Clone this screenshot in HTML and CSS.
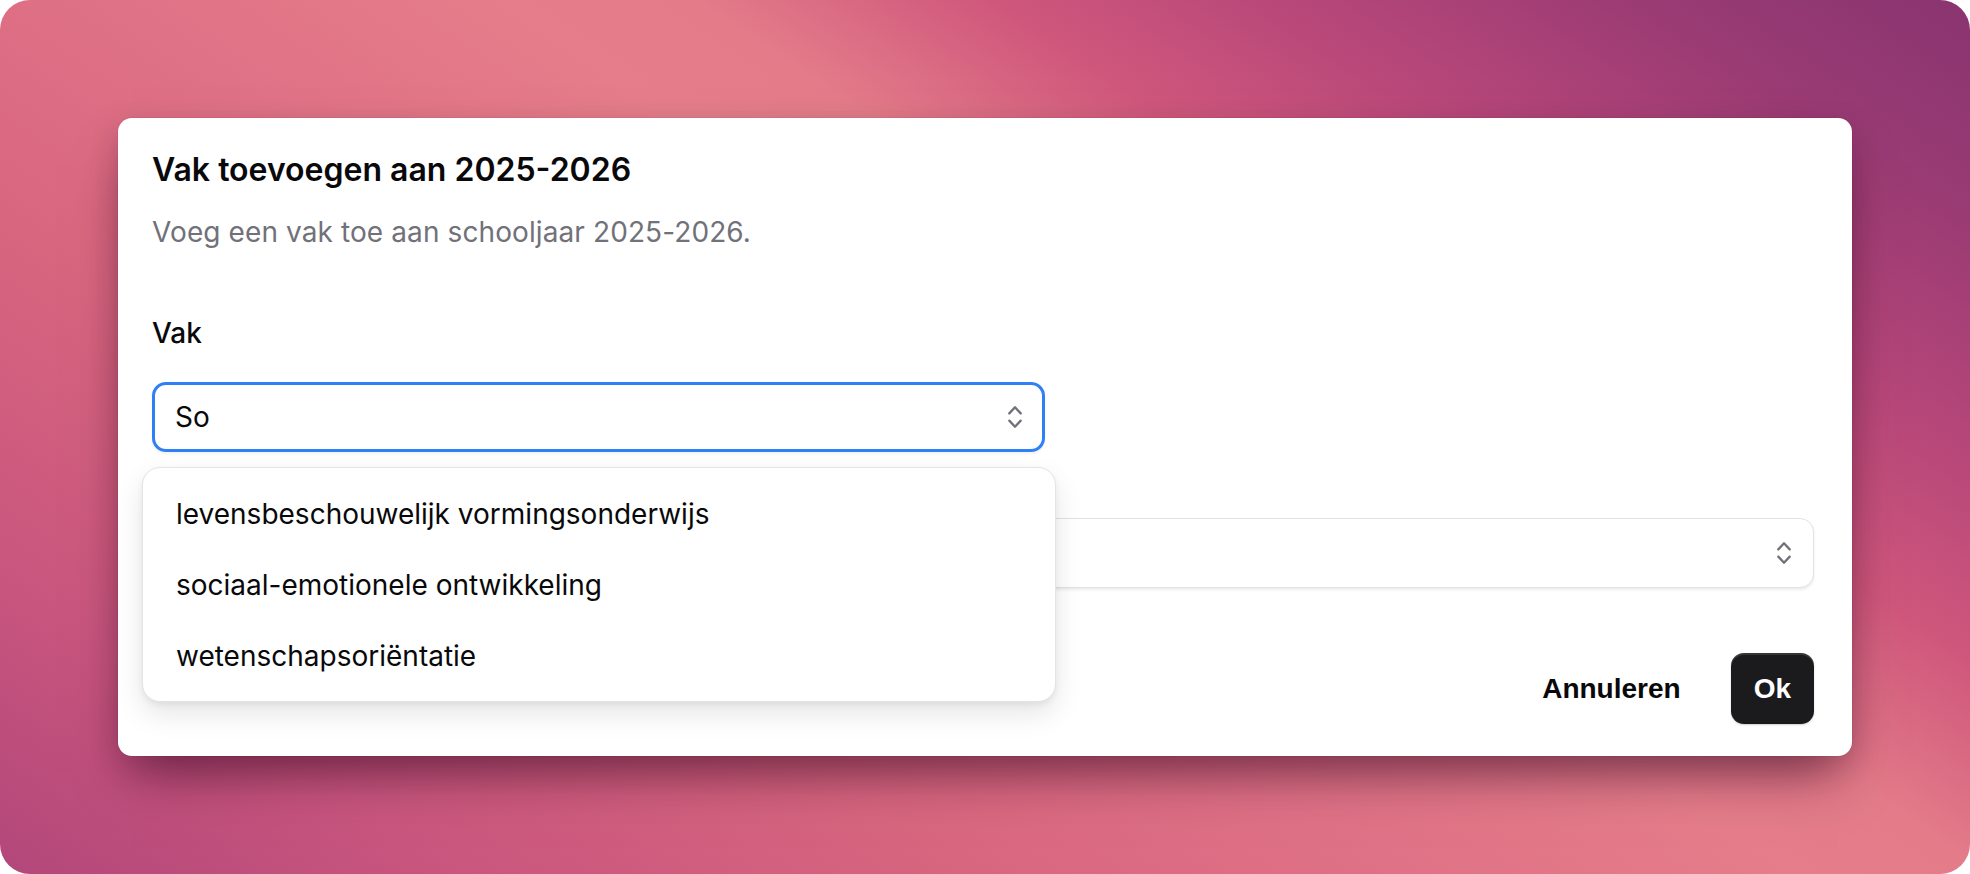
FILE: index.html
```html
<!DOCTYPE html>
<html lang="nl">
<head>
<meta charset="utf-8">
<title>Vak toevoegen</title>
<link rel="stylesheet" href="styles.css">
</head>
<body>
<div class="canvas">
  <div class="dialog" role="dialog" aria-labelledby="dlg-title">
    <h2 class="dialog-title" id="dlg-title">Vak toevoegen aan 2025-2026</h2>
    <p class="dialog-desc">Voeg een vak toe aan schooljaar 2025-2026.</p>

    <div class="field">
      <label class="field-label" for="vak">Vak</label>
      <div class="combo">
        <div class="combo-input focused">
          <span class="combo-value" id="vak">So</span>
          <svg class="chevrons" width="14" height="22" viewBox="0 0 14 22" aria-hidden="true">
            <path d="M1.3 7.4 L7 1.3 L12.7 7.4" />
            <path d="M1.3 14.6 L7 20.7 L12.7 14.6" />
          </svg>
        </div>
        <ul class="options" role="listbox">
          <li class="option">levensbeschouwelijk vormingsonderwijs</li>
          <li class="option">sociaal-emotionele ontwikkeling</li>
          <li class="option">wetenschapsoriëntatie</li>
        </ul>
      </div>
    </div>

    <div class="field second">
      <div class="select-box">
        <span class="combo-value"></span>
        <svg class="chevrons" width="14" height="22" viewBox="0 0 14 22" aria-hidden="true">
          <path d="M1.3 7.4 L7 1.3 L12.7 7.4" />
          <path d="M1.3 14.6 L7 20.7 L12.7 14.6" />
        </svg>
      </div>
    </div>

    <div class="actions">
      <button class="btn btn-plain" type="button">Annuleren</button>
      <button class="btn btn-dark" type="button">Ok</button>
    </div>
  </div>
</div>
</body>
</html>
```

FILE: styles.css
```css
* { box-sizing: border-box; }

html, body {
  margin: 0;
  padding: 0;
  background: #ffffff;
}

body {
  width: 1970px;
  height: 874px;
  overflow: hidden;
  font-family: Inter, "Noto Sans", sans-serif;
  color: #09090b;
}

.canvas {
  width: 1970px;
  height: 874px;
  border-radius: 30px;
  padding: 118px 118px 0 118px;
  background: linear-gradient(34deg,
    #b2477a 0%,
    #c9567e 14%,
    #d8667f 30%,
    #df7186 42%,
    #e57d8a 55%,
    #e37b89 61%,
    #cf577c 70%,
    #b54679 80%,
    #9a3b74 90%,
    #893470 100%);
}

.dialog {
  width: 1734px;
  background: #ffffff;
  border-radius: 14px;
  padding: 30px 38px 32px 34px;
  box-shadow:
    0 30px 50px -14px rgba(60, 10, 40, 0.6),
    0 10px 30px rgba(40, 0, 30, 0.15),
    0 0 0 1px rgba(0, 0, 0, 0.04);
}

.dialog-title {
  margin: 0;
  font-size: 32px;
  line-height: 44px;
  font-weight: 600;
  color: #09090b;
}

.dialog-desc {
  margin: 20px 0 0 0;
  font-size: 28px;
  line-height: 40px;
  letter-spacing: 0.1px;
  color: #71717a;
}

.field {
  margin-top: 61px;
}

.field-label {
  display: block;
  font-size: 28px;
  line-height: 40px;
  font-weight: 500;
  color: #09090b;
}

.combo {
  position: relative;
  width: 893px;
  margin-top: 29px;
}

.combo-input,
.select-box {
  height: 70px;
  border-radius: 14px;
  background: #ffffff;
  display: flex;
  align-items: center;
  justify-content: space-between;
  padding: 0 20px 0 20px;
}

.combo-input.focused {
  border: 3px solid #2f7ff6;
  box-shadow: 0 2px 3px rgba(0, 0, 0, 0.06);
}

.combo-value {
  font-size: 28px;
  line-height: 40px;
  color: #09090b;
}

.chevrons {
  display: block;
  flex: none;
}

.chevrons path {
  fill: none;
  stroke: #71717a;
  stroke-width: 2.3;
  stroke-linecap: round;
  stroke-linejoin: round;
}

.field.second {
  margin-top: 66px;
}

.select-box {
  border: 1px solid #e2e2e5;
  box-shadow: 0 2px 3px rgba(0, 0, 0, 0.08);
  padding-right: 22px;
}

.options {
  position: absolute;
  z-index: 10;
  top: calc(100% + 15px);
  left: -10px;
  width: 914px;
  margin: 0;
  padding: 10px 0;
  list-style: none;
  background: #ffffff;
  border: 1px solid #e4e4e7;
  border-radius: 18px;
  box-shadow:
    0 12px 28px rgba(0, 0, 0, 0.10),
    0 3px 6px rgba(0, 0, 0, 0.06);
}

.option {
  height: 71px;
  display: flex;
  align-items: center;
  padding-left: 33px;
  font-size: 28px;
  color: #09090b;
  white-space: nowrap;
}

.actions {
  margin-top: 65px;
  display: flex;
  justify-content: flex-end;
  align-items: center;
  gap: 27px;
}

.btn {
  font-family: "Liberation Sans", Arial, sans-serif;
  font-weight: 700;
  font-size: 28px;
  line-height: 32px;
  height: 71px;
  border: none;
  border-radius: 13px;
  padding: 0 23px;
  cursor: pointer;
}

.btn-plain {
  background: transparent;
  color: #09090b;
}

.btn-dark {
  background: #1b1b1e;
  color: #ffffff;
  box-shadow:
    inset 0 2px 0 rgba(255, 255, 255, 0.12),
    0 1px 2px rgba(0, 0, 0, 0.2);
}
```
